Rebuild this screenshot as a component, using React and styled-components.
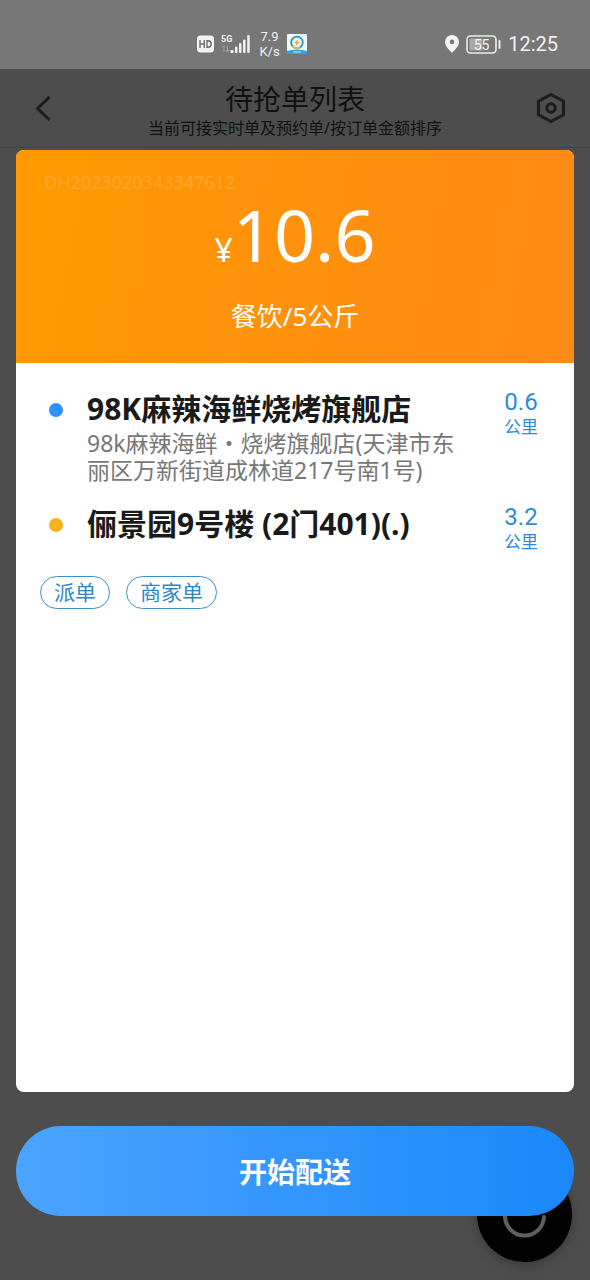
import React from 'react'
import styled, { createGlobalStyle } from 'styled-components'

const GlobalStyle = createGlobalStyle`
  * {
    box-sizing: border-box;
  }
  body {
    margin: 0;
    background: #4d4d4d;
    font-family: 'Noto Sans', 'Noto Sans CJK SC', sans-serif;
  }
  button {
    font-family: inherit;
    border: none;
    cursor: pointer;
  }
  h1, h2, p, ul {
    margin: 0;
    padding: 0;
  }
`

const Page = styled.div`
  position: relative;
  min-height: 100vh;
  display: flex;
  flex-direction: column;
  overflow: hidden;
`

const StatusBar = styled.div`
  height: 69px;
  padding: 19px 32px 0 196px;
  display: flex;
  justify-content: space-between;
  align-items: center;
  background: #777777;
  color: #f0f0f0;
  font-family: Roboto, sans-serif;
`

const StatusGroup = styled.div`
  display: flex;
  align-items: center;
  gap: ${props => props.$gap}px;
`

const Speed = styled.div`
  width: 23px;
  text-align: center;
  font-size: 13px;
  line-height: 15px;
`

const Clock = styled.time`
  font-size: 20px;
  line-height: 24px;
`

const Header = styled.header`
  height: 79px;
  padding: 0 24px;
  display: flex;
  justify-content: space-between;
  align-items: center;
  border-bottom: 1px solid #444444;
  color: #111111;
`

const HeaderTitle = styled.div`
  text-align: center;
  padding-top: 6px;
`

const Title = styled.h1`
  font-size: 28px;
  line-height: 34px;
  font-weight: 400;
`

const Subtitle = styled.p`
  font-size: 16px;
  line-height: 24px;
`

const IconButton = styled.button`
  display: flex;
  padding: 0;
  background: none;
  color: #1c1c1c;
`

const Main = styled.main`
  position: relative;
  flex: 1;
  display: flex;
  flex-direction: column;
  gap: 34px;
  padding: 2px 16px 64px;
`

const Card = styled.section`
  flex: 1;
  background: #ffffff;
  border-radius: 8px;
  overflow: hidden;
`

const PriceBox = styled.div`
  height: 213px;
  padding: 20px 28px;
  background: linear-gradient(100deg, #ff9900, #ff8a18);
  color: #ffffff;
  text-align: center;
`

const OrderNumber = styled.p`
  font-size: 18px;
  line-height: 24px;
  text-align: left;
  color: #ffa62c;
`

const Price = styled.p`
  display: flex;
  justify-content: center;
  align-items: baseline;
  font-size: 72px;
  line-height: 80px;
`

const Currency = styled.span`
  font-size: 32px;
`

const Goods = styled.p`
  margin-top: 8px;
  font-size: 26px;
  line-height: 36px;
`

const Stops = styled.ul`
  display: flex;
  flex-direction: column;
  gap: 19px;
  padding: 25px 32px 0;
  list-style: none;
`

const Stop = styled.li`
  display: flex;
  align-items: flex-start;
`

const Dot = styled.span`
  flex: none;
  width: 14px;
  height: 14px;
  margin: 15px 24px 0 1px;
  border-radius: 50%;
  background: ${props => props.$color};
`

const StopInfo = styled.div`
  flex: 1;
`

const StopName = styled.h2`
  font-size: 30px;
  line-height: 42px;
  font-weight: 700;
  color: #1a1a1a;
`

const Address = styled.p`
  max-width: 374px;
  font-size: 23px;
  line-height: 27px;
  color: #777777;
`

const Distance = styled.div`
  width: 42px;
  text-align: center;
  white-space: nowrap;
  color: #2e8ade;
`

const Km = styled.div`
  font-family: Roboto, sans-serif;
  font-size: 24px;
  line-height: 28px;
`

const Unit = styled.div`
  font-size: 17px;
  line-height: 22px;
`

const Tags = styled.div`
  display: flex;
  gap: 16px;
  padding: 23px 24px;
`

const Tag = styled.span`
  padding: 0 13px;
  border: 1px solid #3d8fc9;
  border-radius: 17px;
  font-size: 21px;
  line-height: 31px;
  color: #2f86c9;
`

const StartButton = styled.button`
  position: relative;
  height: 90px;
  border-radius: 45px;
  background: linear-gradient(90deg, #4ba4ff, #1a88fb);
  color: #ffffff;
  font-size: 28px;
  font-weight: 700;
`

// refresh button that floats behind the start button
const RefreshButton = styled.button`
  position: absolute;
  right: 18px;
  bottom: 18px;
  width: 95px;
  height: 95px;
  padding: 0;
  border-radius: 50%;
  background: #020202;
  box-shadow: 0 2px 12px rgba(0, 0, 0, 0.3);
`

const HdIcon = () => (
  <svg width="19" height="18" viewBox="0 0 19 18">
    <rect x="1" y="0.5" width="17" height="17" rx="3.5" fill="#f2f2f2" />
    <path d="M4 5v8M8.3 5v8M4 9h4.300M11 5.7v6.600h1.300c1.800 0 2.900-1.200 2.900-3.300s-1.100-3.300-2.900-3.300z" fill="none" stroke="#6c6c6c" strokeWidth="1.4" />
  </svg>
)

const SignalIcon = () => (
  <svg width="31" height="22" viewBox="0 0 31 22" fill="#f0f0f0">
    <text x="0" y="9" fontSize="9" fontWeight="700" fontFamily="Roboto, sans-serif">5G</text>
    <path d="M3 19v-6M1 14.5l2-2M6.500 13v6M5 17l1.500 2 1.500-2" stroke="#a5a5a5" fill="none" />
    <rect x="9.5" y="17" width="3" height="3" rx="1" />
    <rect x="14" y="13.5" width="2.5" height="6.5" rx="1" />
    <rect x="18" y="10" width="2.5" height="10" rx="1" />
    <rect x="22" y="6.5" width="2.5" height="13.5" rx="1" />
    <rect x="26.2" y="2" width="2.5" height="18" rx="1" />
  </svg>
)

const AppBadge = () => (
  <svg width="20" height="20" viewBox="0 0 20 20">
    <rect width="20" height="20" rx="1" fill="#eef8fb" />
    <path d="M0 17q10-3 20 0v3H0z" fill="#3aa0dc" />
    <circle cx="10" cy="8.5" r="5.8" fill="none" stroke="#2d91b8" strokeWidth="1.8" />
    <path d="M5.5 12A5.8 5.8 0 0 0 13 13.5" fill="none" stroke="#e6b93c" strokeWidth="1.8" />
    <path d="M11.5 4.8L7 9.200h2.500l-1.300 3.600L13 8h-2.500z" fill="#eda92a" />
    <path d="M6 18h8" stroke="#c8e6f5" strokeWidth="1" />
  </svg>
)

const PinIcon = () => (
  <svg width="14" height="18" viewBox="0 0 14 18">
    <path fillRule="evenodd" fill="#f2f2f2" d="M7 0a7 7 0 0 0-7 7c0 4.5 4.5 8 7 11 2.5-3 7-6.5 7-11a7 7 0 0 0-7-7zm0 4.6a2.300 2.300 0 1 1 0 4.600 2.300 2.300 0 0 1 0-4.600z" />
  </svg>
)

const BatteryIcon = () => (
  <svg width="35" height="19" viewBox="0 0 35 19">
    <rect x="1" y="1" width="29" height="17" rx="3.5" fill="none" stroke="#ececec" strokeWidth="1.6" />
    <rect x="3.5" y="3.5" width="13" height="12" rx="1" fill="#a9a9a9" />
    <text x="15.5" y="14.5" textAnchor="middle" fontSize="14" fontFamily="Roboto, sans-serif" fill="#f4f4f4">55</text>
    <rect x="32.5" y="5" width="2" height="9" rx="1" fill="#ececec" />
  </svg>
)

const BackIcon = () => (
  <svg width="30" height="30" viewBox="0 0 30 30" fill="none" stroke="currentColor" strokeWidth="3">
    <path d="M25.5 4L13.5 15.5 25.5 27" />
  </svg>
)

const SettingIcon = () => (
  <svg width="30" height="32" viewBox="0 0 30 32" fill="none" stroke="currentColor" strokeWidth="3" strokeLinejoin="round">
    <path d="M15 2.5L27.5 9.3V22.7L15 29.5 2.5 22.7V9.3z" />
    <circle cx="15" cy="16" r="4.2" />
  </svg>
)

const RefreshIcon = () => (
  <svg width="95" height="95" viewBox="0 0 95 95" fill="none" stroke="#5f5f5f" strokeWidth="4">
    <path d="M28 48a19.5 19.5 0 0 0 39 2" strokeLinecap="round" />
  </svg>
)

const stops = [
  {
    name: '98K麻辣海鲜烧烤旗舰店',
    address: '98k麻辣海鲜・烧烤旗舰店(天津市东丽区万新街道成林道217号南1号)',
    km: '0.6',
    color: '#2e93f5',
  },
  {
    name: '俪景园9号楼 (2门401)(.)',
    km: '3.2',
    color: '#f7b21e',
  },
]

const tags = ['派单', '商家单']

function App() {
  return (
    <Page>
      <GlobalStyle />
      <StatusBar>
        <StatusGroup $gap={6}>
          <HdIcon />
          <SignalIcon />
          <Speed>7.9<br />K/s</Speed>
          <AppBadge />
        </StatusGroup>
        <StatusGroup $gap={7}>
          <PinIcon />
          <BatteryIcon />
          <Clock>12:25</Clock>
        </StatusGroup>
      </StatusBar>
      <Header>
        <IconButton aria-label="返回"><BackIcon /></IconButton>
        <HeaderTitle>
          <Title>待抢单列表</Title>
          <Subtitle>当前可接实时单及预约单/按订单金额排序</Subtitle>
        </HeaderTitle>
        <IconButton aria-label="设置"><SettingIcon /></IconButton>
      </Header>
      <Main>
        <RefreshButton aria-label="刷新"><RefreshIcon /></RefreshButton>
        <Card>
          <PriceBox>
            <OrderNumber>DH2023020343347612</OrderNumber>
            <Price><Currency>¥</Currency>10.6</Price>
            <Goods>餐饮/5公斤</Goods>
          </PriceBox>
          <Stops>
            {stops.map(stop => (
              <Stop key={stop.name}>
                <Dot $color={stop.color} />
                <StopInfo>
                  <StopName>{stop.name}</StopName>
                  {stop.address && <Address>{stop.address}</Address>}
                </StopInfo>
                <Distance>
                  <Km>{stop.km}</Km>
                  <Unit>公里</Unit>
                </Distance>
              </Stop>
            ))}
          </Stops>
          <Tags>
            {tags.map(tag => <Tag key={tag}>{tag}</Tag>)}
          </Tags>
        </Card>
        <StartButton>开始配送</StartButton>
      </Main>
    </Page>
  )
}

export default App
